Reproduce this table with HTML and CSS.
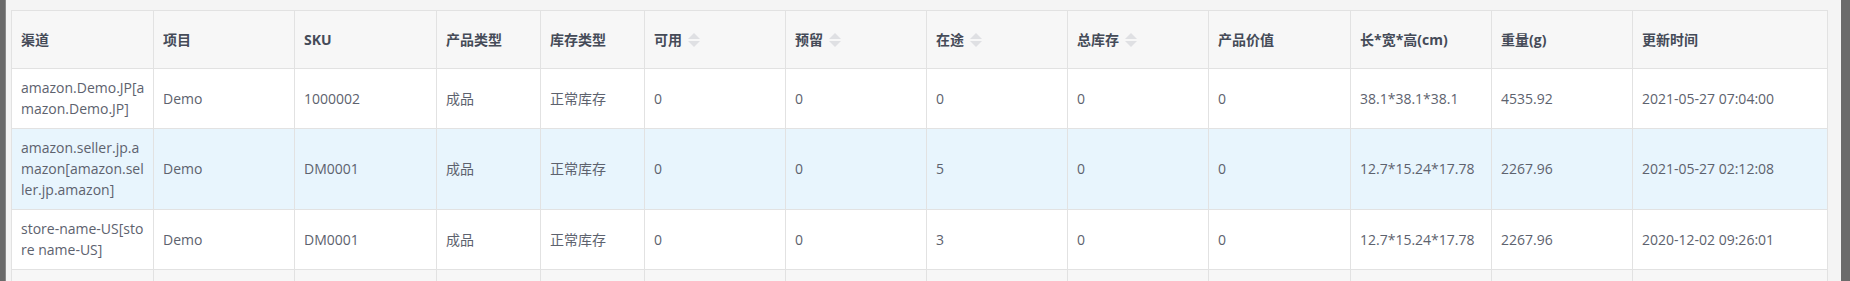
FILE: index.html
```html
<!DOCTYPE html>
<html lang="zh-CN">
<head>
<meta charset="utf-8">
<title>库存列表</title>
<link rel="stylesheet" href="styles.css">
</head>
<body>
<div class="frame">
  <div class="edge"></div>
  <div class="main">
    <table class="grid">
      <colgroup>
        <col class="c142"><col class="c141"><col class="c142"><col class="c104"><col class="c104">
        <col class="c141"><col class="c141"><col class="c141"><col class="c141"><col class="c142">
        <col class="c141"><col class="c141"><col>
      </colgroup>
      <thead>
        <tr>
          <th>渠道</th>
          <th>项目</th>
          <th>SKU</th>
          <th>产品类型</th>
          <th>库存类型</th>
          <th><span class="th-in">可用<svg class="sort" width="14" height="16" viewBox="0 0 14 16"><polygon points="1,7 7,1 13,7"/><polygon points="1,9 7,15 13,9"/></svg></span></th>
          <th><span class="th-in">预留<svg class="sort" width="14" height="16" viewBox="0 0 14 16"><polygon points="1,7 7,1 13,7"/><polygon points="1,9 7,15 13,9"/></svg></span></th>
          <th><span class="th-in">在途<svg class="sort" width="14" height="16" viewBox="0 0 14 16"><polygon points="1,7 7,1 13,7"/><polygon points="1,9 7,15 13,9"/></svg></span></th>
          <th><span class="th-in">总库存<svg class="sort" width="14" height="16" viewBox="0 0 14 16"><polygon points="1,7 7,1 13,7"/><polygon points="1,9 7,15 13,9"/></svg></span></th>
          <th>产品价值</th>
          <th>长*宽*高(cm)</th>
          <th>重量(g)</th>
          <th>更新时间</th>
        </tr>
      </thead>
      <tbody>
        <tr>
          <td class="wrap">amazon.Demo.JP[amazon.Demo.JP]</td>
          <td>Demo</td>
          <td>1000002</td>
          <td>成品</td>
          <td>正常库存</td>
          <td>0</td>
          <td>0</td>
          <td>0</td>
          <td>0</td>
          <td>0</td>
          <td>38.1*38.1*38.1</td>
          <td>4535.92</td>
          <td>2021-05-27 07:04:00</td>
        </tr>
        <tr class="hover">
          <td class="wrap">amazon.seller.jp.amazon[amazon.seller.jp.amazon]</td>
          <td>Demo</td>
          <td>DM0001</td>
          <td>成品</td>
          <td>正常库存</td>
          <td>0</td>
          <td>0</td>
          <td>5</td>
          <td>0</td>
          <td>0</td>
          <td>12.7*15.24*17.78</td>
          <td>2267.96</td>
          <td>2021-05-27 02:12:08</td>
        </tr>
        <tr>
          <td class="wrap">store-name-US[store name-US]</td>
          <td>Demo</td>
          <td>DM0001</td>
          <td>成品</td>
          <td>正常库存</td>
          <td>0</td>
          <td>0</td>
          <td>3</td>
          <td>0</td>
          <td>0</td>
          <td>12.7*15.24*17.78</td>
          <td>2267.96</td>
          <td>2020-12-02 09:26:01</td>
        </tr>
        <tr class="next">
          <td></td><td></td><td></td><td></td><td></td><td></td><td></td>
          <td></td><td></td><td></td><td></td><td></td><td></td>
        </tr>
      </tbody>
    </table>
  </div>
  <div class="scrollbar"></div>
</div>
</body>
</html>
```

FILE: styles.css
```css
html, body {
  margin: 0;
  padding: 0;
  height: 100%;
  overflow: hidden;
  background: #f4f4f4;
}

.frame {
  display: flex;
  height: 281px;
  font-family: "Open Sans", "Noto Sans CJK SC", sans-serif;
  font-size: 14px;
}

.edge {
  width: 5px;
  flex: none;
  background: #6a6a6a;
  border-right: 1px solid #8a8a8a;
}

.main {
  flex: 1;
  min-width: 0;
  background: #f4f4f4;
  padding: 10px 13px 0 5px;
  overflow: hidden;
}

.scrollbar {
  width: 9px;
  flex: none;
  background: #6b6b6b;
}

.grid {
  width: 100%;
  border-collapse: collapse;
  table-layout: fixed;
  background: #fff;
  border: 1px solid #e2e2e2;
}

.c142 { width: 142px; }
.c141 { width: 141px; }
.c104 { width: 104px; }

.grid th,
.grid td {
  border: 1px solid #e2e2e2;
  text-align: left;
  padding: 0 9px;
  line-height: 21px;
}

.grid th {
  height: 58px;
  background: #f7f7f7;
  color: #454b58;
  font-weight: 700;
  box-sizing: border-box;
}

.grid td {
  color: #5d626e;
  padding-top: 8px;
  padding-bottom: 9px;
  white-space: nowrap;
}

.grid td.wrap {
  white-space: normal;
  word-break: break-all;
  padding-right: 7px;
}

.th-in {
  display: inline-flex;
  align-items: center;
  gap: 5px;
}

.sort {
  fill: #dfe0e3;
  display: block;
}

.grid tr.hover td {
  background: #e8f5fd;
}

.grid tr.next td {
  background: #f7f7f7;
  height: 59px;
  padding: 0;
}
```
